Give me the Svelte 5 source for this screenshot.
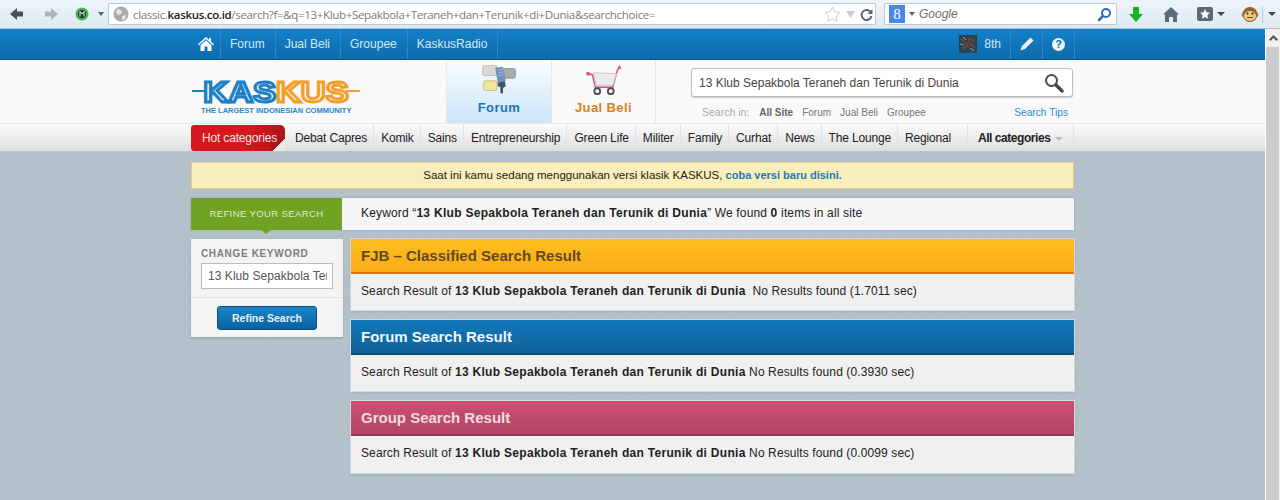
<script lang="ts">
  const navLinks = ["Forum", "Jual Beli", "Groupee", "KaskusRadio"];
  const categories = [
    "Debat Capres", "Komik", "Sains", "Entrepreneurship", "Green Life", "Militer",
    "Family", "Curhat", "News", "The Lounge", "Regional",
  ];
  const keyword = "13 Klub Sepakbola Teraneh dan Terunik di Dunia";
  const results = [
    { title: "FJB – Classified Search Result", kind: "fjb", tail: "\u00a0No Results found (1.7011 sec)" },
    { title: "Forum Search Result", kind: "forum", tail: "No Results found (0.3930 sec)" },
    { title: "Group Search Result", kind: "group", tail: "No Results found (0.0099 sec)" },
  ];
</script>

<div class="browser">
  <div class="toolbar">
    <svg class="tb-back" width="16" height="14" viewBox="0 0 16 14"><path d="M8 1L1 7l7 6V9.500h6v-5H8z" fill="#45525f"/></svg>
    <svg class="tb-fwd" width="16" height="14" viewBox="0 0 16 14"><path d="M8 1l7 6-7 6V9.500H2v-5h6z" fill="#a9b4be"/></svg>
    <svg class="tb-badge" width="14" height="14" viewBox="0 0 14 14"><circle cx="7" cy="7" r="6.500" fill="#45b54a"/><circle cx="7" cy="7" r="4" fill="#20382a"/><path d="M5 9.500v-5l2 2.500 2-2.500v5" fill="none" stroke="#e7f3e5" stroke-width="1"/></svg>
    <span class="caret tb-caret"></span>
    <div class="urlbar">
      <svg width="16" height="16" viewBox="0 0 16 16"><circle cx="8" cy="8" r="7.500" fill="#a7a9ab"/><path d="M4 3l4 1 1 3-3 2-3-2zM9 10l4-1-1 4-3 1z" fill="#e4e5e6"/></svg>
      <span class="url">classic.<b>kaskus.co.id</b>/search?f=&amp;q=13+Klub+Sepakbola+Teraneh+dan+Terunik+di+Dunia&amp;searchchoice=</span>
      <svg width="17" height="16" viewBox="0 0 17 16"><path d="M8.500 1l2.300 4.800 5.200.7-3.800 3.600 1 5.200-4.700-2.600-4.700 2.600 1-5.200L1 6.500l5.200-.7z" fill="#fff" stroke="#c9ced3"/></svg>
      <svg width="11" height="9" viewBox="0 0 11 9"><path d="M1 1h9L5.500 8z" fill="#c6ccd2"/></svg>
      <svg width="13" height="13" viewBox="0 0 13 13"><path d="M11 4.500A5 5 0 1 0 11.500 8" fill="none" stroke="#5c6770" stroke-width="2"/><path d="M12.500 1v5h-5z" fill="#5c6770"/></svg>
    </div>
    <div class="searchbar">
      <span class="g-tile">8</span>
      <span class="caret"></span>
      <span class="g-label">Google</span>
      <svg width="15" height="15" viewBox="0 0 15 15"><circle cx="9" cy="6" r="4" fill="none" stroke="#2a6db0" stroke-width="2"/><path d="M6 9l-4 4" stroke="#2a6db0" stroke-width="2.500" stroke-linecap="round"/></svg>
    </div>
    <svg class="tb-down" width="14" height="15" viewBox="0 0 14 15"><path d="M4 0h6v7h4l-7 8-7-8h4z" fill="#12b71e"/></svg>
    <svg class="tb-home" width="16" height="15" viewBox="0 0 16 15"><path d="M8 0l8 7.500h-2V15h-4v-5H6v5H2V7.500H0z" fill="#5c6b78"/></svg>
    <span class="tb-bookmark"><svg width="12" height="12" viewBox="0 0 12 12"><path d="M6 1l1.500 3.300 3.500.4-2.600 2.400.7 3.600L6 8.900l-3.100 1.800.7-3.600L1 4.700l3.500-.4z" fill="#fff"/></svg></span>
    <span class="caret dark"></span>
    <svg class="tb-monkey" width="18" height="18" viewBox="0 0 18 18"><circle cx="2.500" cy="10" r="2" fill="#c68a45"/><circle cx="15.500" cy="10" r="2" fill="#c68a45"/><circle cx="9" cy="9.500" r="7.500" fill="#9a6129"/><ellipse cx="9" cy="11" rx="6" ry="5" fill="#eec888"/><circle cx="6.500" cy="8.500" r="1" fill="#2c1a0a"/><circle cx="11.500" cy="8.500" r="1" fill="#2c1a0a"/><path d="M6 12.500h6" stroke="#6b3d12"/></svg>
    <span class="tb-divider"></span>
    <span class="caret dark"></span>
  </div>

  <div class="page-row">
    <div class="page">
      <nav class="topnav">
        <div class="wrap topnav-in">
          <a class="nav-cell home" href="#home" aria-label="Home">
            <svg width="16" height="14" viewBox="0 0 16 14"><path d="M8 0l3 2.700V1h2v3.500L16 7.200l-1 1-7-6.300-7 6.300-1-1zM8 3.300l5.500 5V14H9.500V9.500h-3V14H2.500V8.300z" fill="#fff"/></svg>
          </a>
          {#each navLinks as link}
            <a class="nav-cell" href="#nav">{link}</a>
          {/each}
          <span class="nav-spacer"></span>
          <span class="nav-user">
            <svg width="18" height="18" viewBox="0 0 18 18"><rect width="18" height="18" fill="#27434f"/><path d="M2 4l6 5-3 6M9 2l2 7 5 3M3 13l7-2M12 4l3 3" stroke="#8d3f3a" stroke-width="1.500" fill="none"/><path d="M4 2l3 3M11 13l4 3M1 9l4 1" stroke="#7fa7b8" fill="none"/></svg>
            8th
          </span>
          <a class="nav-icon" href="#write" aria-label="Write">
            <svg width="14" height="14" viewBox="0 0 14 14"><path d="M10.500.5l3 3-8.500 8.500-4.500 1.500L2 9z" fill="#e8f1f7"/></svg>
          </a>
          <a class="nav-icon" href="#help" aria-label="Help">
            <span class="help">?</span>
          </a>
        </div>
      </nav>

      <header class="masthead">
        <div class="wrap masthead-in">
          <a class="logo" href="#logo">
            <svg width="168" height="37" viewBox="0 0 168 37">
              <path d="M0 18h14" stroke="#1b80c4" stroke-width="2" />
              <path d="M154 18h14" stroke="#f59f2b" stroke-width="2" />
              <g transform="scale(1.19 1)">
                <text x="9.500" y="29" class="logo-blue">KAS</text>
                <text x="70.500" y="29" class="logo-orange">KUS</text>
              </g>
            </svg>
            <span class="tagline">THE LARGEST INDONESIAN COMMUNITY</span>
          </a>
          <a class="tab tab-forum" href="#forum">
            <svg width="37" height="30" viewBox="0 0 40 34">
              <rect x="1" y="0" width="16" height="12" rx="2" fill="#d8d8d6" stroke="#b8b8b6"/>
              <rect x="24" y="4" width="14" height="11" rx="2" fill="#a9acab" stroke="#8f9291"/>
              <rect x="2" y="18" width="15" height="11" rx="2" fill="#efe89b" stroke="#c4bd6d"/>
              <path d="M15 3l9-1 3 16-9 2z" fill="#6e93bb"/>
              <path d="M18 20l8-2 1 6-3 2v6h-3v-7l-3-1z" fill="#44525f"/>
              <path d="M18 6l6-1M18.500 9l6-1M19 12l6-1" stroke="#a9c2dc"/>
            </svg>
            <span>Forum</span>
          </a>
          <a class="tab tab-jual" href="#jual">
            <svg width="38" height="30" viewBox="0 0 38 31">
              <path d="M3 9l4 1 3 13h18l5-18 3-3" fill="none" stroke="#e4478d" stroke-width="1.500"/>
              <path d="M8 8l24 1-4 12H11z" fill="#ececec" stroke="#c7c7c7"/>
              <circle cx="2.500" cy="9" r="2" fill="#e4478d"/>
              <path d="M35 0l2 4-4-1z" fill="#e4478d"/>
              <circle cx="12" cy="27" r="3" fill="#fff" stroke="#555" stroke-width="2"/>
              <circle cx="26" cy="27" r="3" fill="#fff" stroke="#555" stroke-width="2"/>
            </svg>
            <span>Jual Beli</span>
          </a>
          <div class="search">
            <div class="search-box">
              <span class="search-text">{keyword}</span>
              <svg width="20" height="20" viewBox="0 0 20 20"><circle cx="7.500" cy="7.500" r="5.500" fill="none" stroke="#4a4a4a" stroke-width="2"/><path d="M12 12l6 6" stroke="#4a4a4a" stroke-width="3.500" stroke-linecap="round"/></svg>
            </div>
            <div class="search-opts">
              <span class="opt-label">Search in:</span>
              <b>All Site</b>
              <span>Forum</span>
              <span>Jual Beli</span>
              <span>Groupee</span>
              <a href="#tips">Search Tips</a>
            </div>
          </div>
        </div>
      </header>

      <div class="catbar">
        <div class="wrap catbar-in">
          <a class="hot" href="#hot"><span class="fold"></span><span class="hot-label">Hot categories</span></a>
          {#each categories as cat}
            <a class="cat" href="#cat">{cat}</a>
          {/each}
          <a class="cat-all" href="#all">All categories <i></i></a>
        </div>
      </div>

      <main class="wrap content">
        <div class="notice">Saat ini kamu sedang menggunakan versi klasik KASKUS, <a href="#new">coba versi baru disini.</a></div>
        <div class="refine-bar">
          <div class="refine-tag">REFINE YOUR SEARCH</div>
          <div class="refine-info">Keyword “<b>{keyword}</b>” We found <b>0</b> items in all site</div>
        </div>
        <div class="columns">
          <aside class="side">
            <div class="side-top">
              <div class="side-title">CHANGE KEYWORD</div>
              <input class="side-input" type="text" value={keyword} readonly />
            </div>
            <div class="side-bottom"><button>Refine Search</button></div>
          </aside>
          <div class="results">
            {#each results as r}
              <section class="result">
                <h2 class={r.kind}>{r.title}</h2>
                <p>Search Result of <b>{keyword}</b> {r.tail}</p>
              </section>
            {/each}
          </div>
        </div>
      </main>
    </div>

    <div class="scrollbar">
      <div class="sb-up"><svg width="9" height="7" viewBox="0 0 9 7"><path d="M4.500 0L9 4.500 7.500 6 4.500 3 1.500 6 0 4.500z" fill="#555"/></svg></div>
      <div class="sb-thumb"></div>
    </div>
  </div>
</div>

<style>
  :global(body) {
    margin: 0;
    font-family: "Liberation Sans", Arial, sans-serif;
    overflow: hidden;
  }
  a {
    text-decoration: none;
    color: inherit;
  }
  .browser {
    width: 1280px;
    height: 500px;
    overflow: hidden;
  }
  .toolbar {
    height: 29px;
    box-sizing: border-box;
    display: flex;
    align-items: center;
    background: linear-gradient(#eef4fa, #dfe9f2);
    border-bottom: 1px solid #b4c3d0;
    padding-left: 9px;
  }
  .tb-fwd { margin-left: 18px; }
  .tb-badge { margin-left: 16px; }
  .caret {
    width: 0;
    height: 0;
    flex-shrink: 0;
    border: 3px solid transparent;
    border-top: 4px solid #5a6670;
    border-bottom: 0;
  }
  .caret.dark { border-top-color: #3f4a54; border-width: 4px 4px 0; }
  .tb-caret { margin: 0 4px 0 9px; }
  .urlbar {
    width: 768px;
    height: 22px;
    box-sizing: border-box;
    display: flex;
    align-items: center;
    gap: 4px;
    padding: 0 2px 0 4px;
    background: #fff;
    border: 1px solid #bccad6;
    border-radius: 2px;
  }
  .url {
    flex: 1;
    font-size: 11.5px;
    color: #7a7a7a;
    font-family: "Open Sans", sans-serif;
    letter-spacing: -0.33px;
    white-space: nowrap;
  }
  .url b { color: #1a1a1a; font-weight: 600; }
  .searchbar {
    width: 233px;
    height: 22px;
    box-sizing: border-box;
    margin-left: 8px;
    display: flex;
    align-items: center;
    padding: 0 4px;
    background: #fff;
    border: 1px solid #bccad6;
    border-radius: 2px;
  }
  .g-tile {
    width: 16px;
    height: 18px;
    background: #4a86e8;
    color: #fff;
    font: 15px/18px "Liberation Serif", serif;
    text-align: center;
    margin-right: 4px;
  }
  .g-label {
    flex: 1;
    margin-left: 4px;
    font: italic 12px "Liberation Sans", sans-serif;
    color: #6d6d6d;
  }
  .tb-down { margin-left: 12px; }
  .tb-home { margin-left: 20px; }
  .tb-bookmark {
    width: 16px;
    height: 14px;
    margin-left: 18px;
    margin-right: 4px;
    background: #5a6975;
    border-radius: 2px;
    display: flex;
    align-items: center;
    justify-content: center;
  }
  .tb-monkey { margin-left: 16px; }
  .tb-divider {
    width: 1px;
    height: 17px;
    margin: 0 5px 0 3px;
    background: #bcc8d2;
  }

  .page-row {
    display: flex;
    height: 471px;
  }
  .page {
    width: 1265px;
    background: #b2c0c9 repeating-linear-gradient(135deg, rgba(255, 255, 255, 0.05) 0 1px, transparent 1px 3px);
  }
  .wrap {
    width: 883px;
    margin-left: 191px;
  }

  .scrollbar {
    width: 15px;
    background: #f0f0f0;
    border-left: 1px solid #fff;
    box-sizing: border-box;
  }
  .sb-up {
    height: 18px;
    display: flex;
    align-items: center;
    justify-content: center;
  }
  .sb-thumb {
    height: 453px;
    background: #cdcdcd;
    border-right: 1px solid #f0f0f0;
  }

  .topnav {
    height: 31px;
    box-sizing: border-box;
    background: linear-gradient(#1280c8, #0f6cab);
    border-bottom: 1px solid #0b5587;
    color: #d5e7f3;
    font-size: 12px;
  }
  .topnav-in {
    display: flex;
    height: 100%;
    width: 884px;
  }
  .nav-cell {
    display: flex;
    align-items: center;
    padding: 0 10px 0 9px;
    border-right: 1px solid #2a88c6;
  }
  .nav-cell.home {
    width: 30px;
    box-sizing: border-box;
    padding: 0 0 0 7px;
  }
  .nav-spacer { flex: 1; }
  .nav-user {
    display: flex;
    align-items: center;
    gap: 7px;
    padding-right: 9px;
    border-right: 1px solid #2a88c6;
  }
  .nav-icon {
    width: 31px;
    display: flex;
    align-items: center;
    justify-content: center;
    border-right: 1px solid #2a88c6;
  }
  .help {
    width: 13px;
    height: 13px;
    border-radius: 50%;
    background: #eef5fa;
    color: #0f6cab;
    font: bold 11px/13px "Liberation Sans", sans-serif;
    text-align: center;
  }

  .masthead {
    height: 64px;
    box-sizing: border-box;
    background: #f9f9f9;
    border-bottom: 1px solid #eaeaea;
  }
  .masthead-in {
    display: flex;
    height: 100%;
  }
  .logo {
    width: 255px;
    display: flex;
    flex-direction: column;
    padding-top: 13px;
    box-sizing: border-box;
  }
  .logo svg { margin-left: 1px; flex-shrink: 0; }
  .logo text {
    font: bold 29px "Liberation Sans", sans-serif;
    fill: #fff;
    stroke-width: 2.8;
  }
  .logo-blue { stroke: #1b80c4; }
  .logo-orange { stroke: #f59f2b; }
  .tagline {
    margin: -4px 0 0 10px;
    font-size: 7.5px;
    line-height: 9px;
    font-weight: bold;
    color: #2d86c5;
    white-space: nowrap;
  }
  .tab {
    width: 105px;
    box-sizing: border-box;
    display: flex;
    flex-direction: column;
    align-items: center;
    padding-top: 5px;
    border-left: 1px solid #e8e8e8;
    font-size: 13px;
    font-weight: bold;
    letter-spacing: 0.4px;
  }
  .tab span { margin-top: 5px; line-height: 15px; }
  .tab-forum {
    background: linear-gradient(#fafcfe, #cbe6fb);
    color: #1b75b4;
  }
  .tab-jual {
    color: #d9821c;
    border-right: 1px solid #e8e8e8;
  }
  .search {
    width: 382px;
    margin-left: 35px;
    padding-top: 8px;
    box-sizing: border-box;
  }
  .search-box {
    height: 29px;
    box-sizing: border-box;
    display: flex;
    align-items: center;
    justify-content: space-between;
    padding: 0 8px 0 7px;
    background: #fff;
    border: 1px solid #bdbdbd;
    border-radius: 3px;
    box-shadow: 0 1px 1px #ccc;
  }
  .search-text {
    padding-top: 1px;
    font-size: 12px;
    color: #444;
  }
  .search-opts {
    display: flex;
    gap: 9px;
    margin-top: 9px;
    padding-left: 11px;
    font-size: 10px;
    color: #777;
    line-height: 13px;
  }
  .opt-label { color: #aaa; font-size: 10.500px; margin-right: 1px; }
  .search-opts b { color: #666; }
  .search-opts a {
    margin-left: auto;
    margin-right: 5px;
    font-size: 10.200px;
    color: #2a8ccb;
  }

  .catbar {
    height: 28px;
    box-sizing: border-box;
    background: linear-gradient(#fbfbfb, #dedede);
    border-bottom: 1px solid #c2c2c2;
    font-size: 12px;
    color: #222;
  }
  .catbar-in {
    display: flex;
    height: 100%;
    border-right: 1px solid #e2e2e2;
    box-sizing: border-box;
  }
  .hot {
    position: relative;
    flex-shrink: 0;
    width: 94px;
    box-sizing: border-box;
    margin-top: 1px;
    padding: 6px 0 0 11px;
    background: linear-gradient(100deg, #d4181e 60%, #a8141a);
    color: #f6e3e3;
    border-radius: 3px 5px 0 3px;
    white-space: nowrap;
    overflow: hidden;
    letter-spacing: -0.17px;
  }
  .hot-label {
    position: relative;
  }
  .fold {
    position: absolute;
    right: 0;
    bottom: 0;
    width: 14px;
    height: 12px;
    background: linear-gradient(135deg, #a8141a 50%, #e9e9e9 50%);
  }
  .cat {
    flex-shrink: 0;
    display: flex;
    align-items: center;
    box-sizing: border-box;
    padding: 0 6px 0 7px;
    border-right: 1px solid #e2e2e2;
    white-space: nowrap;
    letter-spacing: -0.16px;
  }
  .hot + .cat { padding-left: 10px; }
  .cat:nth-child(12) { width: 70px; }
  .cat-all {
    flex-shrink: 0;
    display: flex;
    align-items: center;
    gap: 5px;
    padding-left: 10px;
    font-weight: bold;
    white-space: nowrap;
    letter-spacing: -0.45px;
  }
  .cat-all i {
    width: 0;
    height: 0;
    margin-top: 2px;
    border: 4px solid transparent;
    border-top: 4px solid #bdbdbd;
    border-bottom: 0;
  }

  .content {
    padding-top: 10px;
    font-size: 12px;
    color: #222;
  }
  .notice {
    height: 27px;
    box-sizing: border-box;
    border: 1px solid #f3c886;
    background: #faeeba;
    text-align: center;
    line-height: 24px;
    font-size: 11.5px;
  }
  .notice a {
    color: #1c79b8;
    font-size: 11px;
    font-weight: bold;
  }
  .refine-bar {
    display: flex;
    height: 32px;
    margin-top: 9px;
    background: #f5f5f5;
    box-shadow: 0 0 2px #8f9ca5;
  }
  .refine-tag {
    position: relative;
    width: 151px;
    background: #70a224;
    color: #e0ecc5;
    font-size: 9.500px;
    letter-spacing: 0.4px;
    text-align: center;
    line-height: 31px;
  }
  .refine-tag::after {
    content: "";
    position: absolute;
    left: 70px;
    top: 100%;
    border: 5px solid transparent;
    border-top: 4px solid #70a224;
    border-bottom: 0;
  }
  .refine-info {
    padding-left: 19px;
    line-height: 30px;
    letter-spacing: 0.15px;
  }
  .refine-info b, .result p b { letter-spacing: 0.3px; }
  .columns {
    display: flex;
    gap: 8px;
    margin-top: 9px;
    align-items: flex-start;
  }
  .side {
    width: 152px;
    background: #f4f4f4;
    box-shadow: 0 1px 2px #8f9ca5;
  }
  .side-top {
    padding: 9px 10px 8px;
    border-bottom: 1px solid #e2e2e2;
  }
  .side-title {
    font-size: 10px;
    font-weight: bold;
    color: #7c7c7c;
    letter-spacing: 0.65px;
    line-height: 12px;
  }
  .side-input {
    display: block;
    width: 100%;
    height: 26px;
    box-sizing: border-box;
    margin: 3px 0 0;
    padding: 0 5px 0 6px;
    background: #fff;
    border: 1px solid #bbb;
    border-radius: 0;
    outline: none;
    font: 12px "Liberation Sans", sans-serif;
    color: #555;
    letter-spacing: 0.05px;
  }
  .side-bottom {
    padding: 8px 0 7px;
    text-align: center;
    line-height: 0;
  }
  .side-bottom button {
    width: 100px;
    height: 24px;
    padding: 0;
    background: linear-gradient(#1a86cc, #0c5f9d);
    border: 1px solid #0b4f80;
    border-radius: 3px;
    color: #e6f1f8;
    font: bold 10.500px "Liberation Sans", sans-serif;
  }
  .results {
    width: 723px;
    display: flex;
    flex-direction: column;
    gap: 10px;
  }
  .result {
    background: #f0f0f0;
    box-shadow: 0 0 0 1px #d4dbe0, 0 1px 3px #8f9ca5;
  }
  .result h2 {
    margin: 0;
    height: 35px;
    box-sizing: border-box;
    padding-left: 10px;
    font-size: 15px;
    line-height: 33px;
    font-weight: bold;
    border-bottom-width: 2px;
    border-bottom-style: solid;
  }
  .fjb {
    background: linear-gradient(#fdbf1d, #fbab19);
    color: #5f4a1e;
    border-color: #d9730f;
  }
  .forum {
    background: linear-gradient(#1278ba, #0e6299);
    color: #f0f6fa;
    border-color: #0b4b78;
  }
  .group {
    background: linear-gradient(#cc5071, #b24566);
    color: #f3dbe1;
    border-color: #96354f;
  }
  .result p {
    margin: 0;
    height: 36px;
    padding-left: 10px;
    line-height: 34px;
    white-space: pre-wrap;
    letter-spacing: 0.11px;
  }
  .result:last-child p { height: 37px; }
</style>
